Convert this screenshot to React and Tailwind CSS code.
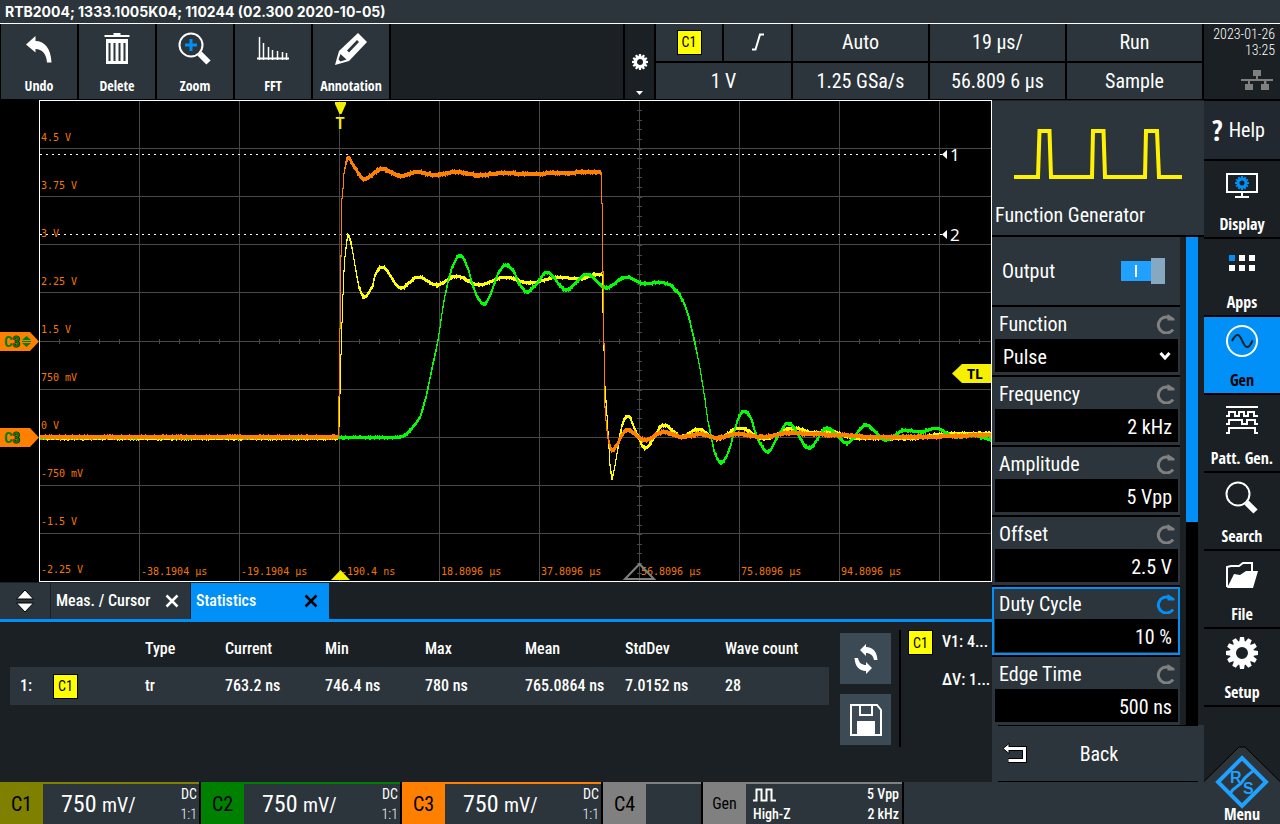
import React from "react";

const UI = "font-['Roboto_Condensed','Open_Sans_Condensed',sans-serif]";

/* ---------- trace geometry ---------- */

// Monotone cubic interpolation through the given points, one sample per pixel.
function sample(points) {
  const n = points.length;
  const d = [];
  for (let i = 0; i < n - 1; i++) {
    d.push((points[i + 1][1] - points[i][1]) / (points[i + 1][0] - points[i][0]));
  }
  const m = [d[0]];
  for (let i = 1; i < n - 1; i++) {
    m.push(d[i - 1] * d[i] <= 0 ? 0 : (2 * d[i - 1] * d[i]) / (d[i - 1] + d[i]));
  }
  m.push(d[n - 2]);
  const out = [];
  let k = 0;
  for (let x = Math.ceil(points[0][0]); x <= points[n - 1][0]; x++) {
    while (k < n - 2 && x > points[k + 1][0]) k++;
    const [x0, y0] = points[k];
    const [x1, y1] = points[k + 1];
    const h = x1 - x0;
    const t = (x - x0) / h;
    const t2 = t * t;
    const t3 = t2 * t;
    out.push([
      x,
      (2 * t3 - 3 * t2 + 1) * y0 + (t3 - 2 * t2 + t) * h * m[k] + (-2 * t3 + 3 * t2) * y1 + (t3 - t2) * h * m[k + 1],
    ]);
  }
  return out;
}

// Vertical strokes, one per column, with a little acquisition noise.
function tracePath(points, thick, seed) {
  let s = seed;
  const rnd = () => {
    s = (s * 16807) % 2147483647;
    return s / 2147483647;
  };
  let prev = null;
  return sample(points)
    .map(([x, y]) => {
      const from = prev === null ? y : prev;
      prev = y;
      const steep = Math.abs(y - from) > 5;
      const w = steep ? 1 : thick;
      const a = Math.round(Math.min(y, from) - w / 2 - (rnd() > 0.8 ? 1 : 0));
      const b = Math.round(Math.max(y, from) + w / 2 + (rnd() > 0.8 ? 1 : 0));
      return `M${x - 0.5} ${a}V${b}`;
    })
    .join("");
}

const ORANGE = [
  [41, 437], [338, 437], [339, 396], [340, 328], [341, 255], [342, 198], [343, 188], [344, 173], [348, 158], [355, 168],
  [364, 179], [382, 169], [401, 176], [417, 172], [435, 175], [456, 172], [479, 175], [507, 173], [525, 174], [560, 173],
  [600, 172], [601, 172], [602, 203], [603, 271], [604, 344], [605, 407], [606, 420], [608, 437], [612, 450], [627, 430],
  [645, 440], [664, 432], [682, 437], [700, 434], [717, 438], [738, 434], [762, 437], [790, 433], [810, 434], [840, 435],
  [875, 437], [930, 437], [950, 436], [991, 435],
];
const YELLOW = [
  [41, 438], [338, 438], [339, 425], [341, 354], [342, 322], [343, 294], [344, 270], [346, 247], [348, 235], [351, 243],
  [355, 265], [359, 287], [364, 297], [372, 287], [376, 273], [382, 267], [401, 288], [418, 277], [437, 285], [456, 276],
  [479, 285], [505, 277], [529, 283], [560, 277], [578, 279], [600, 274], [602, 274], [603, 312], [604, 350], [605, 386],
  [607, 415], [609, 448], [610, 465], [612, 478], [615, 465], [618, 447], [621, 430], [624, 420], [628, 416], [636, 432],
  [645, 448], [664, 425], [682, 437], [698, 429], [717, 439], [740, 428], [764, 439], [793, 428], [815, 433], [828, 431],
  [855, 438], [905, 439], [945, 434], [991, 433],
];
const GREEN = [
  [41, 438], [400, 437], [405, 435], [412, 428], [420, 417], [426, 397], [431, 373], [438, 340], [443, 307], [447, 286],
  [450, 274], [454, 263], [460, 255], [467, 266], [473, 286], [478, 298], [484, 304], [491, 293], [497, 276], [501, 269],
  [506, 265], [514, 272], [519, 283], [527, 292], [535, 286], [547, 272], [566, 290], [587, 274], [606, 288], [626, 277],
  [645, 284], [659, 282], [668, 284], [676, 290], [682, 299], [687, 311], [691, 326], [695, 343], [698, 358], [701, 374],
  [704, 393], [706, 407], [708, 421], [711, 436], [714, 450], [717, 458], [721, 463], [726, 457], [731, 444], [736, 425],
  [740, 415], [745, 411], [750, 416], [755, 431], [760, 443], [768, 452], [777, 438], [788, 423], [809, 448], [827, 428],
  [847, 443], [866, 425], [886, 440], [905, 430], [921, 432], [936, 428], [955, 437], [970, 435], [991, 440],
];

const H_LINES = [148, 196, 244, 292, 341, 389, 437, 485, 533];
const V_LINES = [139, 239, 339, 439, 539, 639, 739, 839, 939];
const V_LABELS = ["4.5 V", "3.75 V", "3 V", "2.25 V", "1.5 V", "750 mV", "0 V", "-750 mV", "-1.5 V", "-2.25 V"];
const T_LABELS = ["-38.1904 µs", "-19.1904 µs", "-190.4 ns", "18.8096 µs", "37.8096 µs", "56.8096 µs", "75.8096 µs", "94.8096 µs"];
const H_TICKS = Array.from({ length: 47 }, (_, i) => 59 + i * 20);
const V_TICKS = Array.from({ length: 49 }, (_, i) => Math.round(110 + i * 9.64));

function Graticule() {
  return (
    <svg viewBox="0 100 992 482" className="block w-full bg-black" role="img" aria-label="Waveform display">
      <g stroke="#484848" strokeWidth="1" shapeRendering="crispEdges">
        {H_LINES.map((y) => <path key={y} d={`M40 ${y}.5H991`} />)}
        {V_LINES.map((x) => <path key={x} d={`M${x}.5 101V581`} />)}
        {H_TICKS.map((x) => <path key={x} d={`M${x}.5 339V344`} />)}
        {V_TICKS.map((y) => <path key={y} d={`M637 ${y}.5H642`} />)}
      </g>
      <g fill="#f07800" fontSize="10" className="font-['DejaVu_Sans_Mono',monospace]">
        {V_LABELS.map((t, i) => <text key={t} x="41" y={141 + i * 48}>{t}</text>)}
        {T_LABELS.map((t, i) => <text key={t} x={141 + i * 100} y="575">{t}</text>)}
      </g>
      <g stroke="#fff" strokeDasharray="2 4" shapeRendering="crispEdges">
        <path d="M40 154.5H942" />
        <path d="M40 234.5H942" />
      </g>
      <g strokeWidth="1" fill="none" shapeRendering="crispEdges">
        <path stroke="#ffff00" d={tracePath(YELLOW, 3, 11)} />
        <path stroke="#00ff00" d={tracePath(GREEN, 3, 77)} />
        <path stroke="#ff8000" d={tracePath(ORANGE, 4, 5)} />
      </g>
      <path d="M39.5 100.5H991.5V581.5H39.5Z" fill="none" stroke="#fff" shapeRendering="crispEdges" />
      <g fill="#fff" fontSize="17" className="font-['Noto_Sans',sans-serif]">
        <path d="M942 154.5L947 150V159Z" />
        <path d="M942 234.5L947 230V239Z" />
        <text x="950" y="161">1</text>
        <text x="950" y="241">2</text>
      </g>
      <g fill="#f4f000">
        <path d="M335 102H346V104L341.5 114H339.5L335 104Z" />
        <text x="340" y="129" fontSize="16" fontWeight="600" textAnchor="middle" className="font-['Noto_Sans',sans-serif]">T</text>
        <path d="M331 580L340.5 570L350 580Z" />
        <path d="M952 373.5L962 364H991V383H962Z" />
      </g>
      <text x="975" y="379" fontSize="14" fontWeight="700" textAnchor="middle" className="font-['Noto_Sans',sans-serif]">TL</text>
      <path d="M625 579L639.5 564L654 579Z" fill="none" stroke="#808080" strokeWidth="2" />
      {[341, 437].map((y) => (
        <g key={y}>
          <path d={`M0 ${y - 9}H30L39 ${y + 0.5}L30 ${y + 10}H0Z`} fill="#ff8000" />
          <text x="4" y={y + 6} fontSize="15" fontWeight="700" fill="#008000">
            C<tspan stroke="#000" strokeWidth="1" paintOrder="stroke">3</tspan>
          </text>
        </g>
      ))}
      <path d="M22 340L26.5 336L31 340ZM22 343L26.5 347L31 343ZM22 341h9v1h-9z" fill="#008000" />
    </svg>
  );
}

/* ---------- icons ---------- */

function Gear({ className, teeth = 12 }) {
  return (
    <svg viewBox="0 0 32 32" className={className} aria-hidden="true">
      <g fill="currentColor">
        {Array.from({ length: teeth }, (_, i) => (
          <path key={i} d="M14 0H18L19 6H13Z" transform={`rotate(${(360 / teeth) * i} 16 16)`} />
        ))}
      </g>
      <circle cx="16" cy="16" r="9" fill="none" stroke="currentColor" strokeWidth="6" />
    </svg>
  );
}

const UndoIcon = () => (
  <svg viewBox="0 0 34 34" className="size-[34px]" aria-hidden="true">
    <path d="M4 12.5L13.500 4V9C22 9 29 16 29.500 30.500H25C24.500 22 20 17 13.500 17V20.500Z" fill="#fff" />
  </svg>
);
const TrashIcon = () => (
  <svg viewBox="0 0 34 34" className="size-[34px]" aria-hidden="true">
    <path d="M4.5 3H13.500V1H20.500V3H29.500V5H4.500Z" fill="#fff" />
    <path d="M6 7H28V32H6Z" fill="#fff" />
    <path d="M9.5 11V29M14.500 11V29M19.500 11V29M24.500 11V29" stroke="#2b353b" strokeWidth="2" />
  </svg>
);
const Magnifier = ({ plus = false, className }) => (
  <svg viewBox="0 0 34 34" className={className} aria-hidden="true">
    <circle cx="13" cy="13" r="11.5" fill="none" stroke="#fff" strokeWidth="2" />
    <path d="M21.5 21.500L30.500 30.500" stroke="#fff" strokeWidth="6" />
    {plus && <path d="M13 7V19M7 13H19" stroke="#0090f8" strokeWidth="3" />}
  </svg>
);
const FftIcon = () => (
  <svg viewBox="0 0 34 34" className="size-[34px]" aria-hidden="true">
    <path d="M1 26.5H33" stroke="#fff" strokeWidth="2" />
    <path d="M3.5 5V28M7.500 11V28M12.500 15V28M16.500 18V28M21.500 19V28M26.500 20V28M30.500 21V28" stroke="#fff" strokeWidth="1.5" />
  </svg>
);
const PencilIcon = () => (
  <svg viewBox="0 0 34 34" className="size-[34px]" aria-hidden="true">
    <path d="M24 1L33 10L15 29L1 33L5 19Z" fill="#fff" />
    <path d="M23 8L25 10L15 20.500L13 18.500ZM6.500 22L12.500 27.500L6.500 29.500L4.500 27.500Z" fill="#2b353b" />
  </svg>
);
const EdgeIcon = () => (
  <svg viewBox="0 0 14 18" className="h-[18px] w-[14px]" aria-label="Rising edge">
    <path d="M1 16.5H4.500L9 1.500H13" fill="none" stroke="#fff" strokeWidth="2" />
  </svg>
);
const NetworkIcon = () => (
  <svg viewBox="0 0 32 20" className="h-5 w-8" aria-label="Network">
    <path d="M12 0H20V6H17V9H32V11H25.500V14H28V20H20V14H23V11H9V14H12V20H4V14H7V11H0V9H15V6H12Z" fill="#808080" />
  </svg>
);
const DisplayIcon = () => (
  <svg viewBox="0 0 32 32" className="size-8" aria-hidden="true">
    <path d="M1 5H31V23H1Z" fill="none" stroke="#fff" strokeWidth="2" />
    <path d="M15 24H17V27H23V29H9V27H15Z" fill="#fff" />
    <g fill="#0090f8">
      {Array.from({ length: 12 }, (_, i) => (
        <path key={i} d="M15 7H17V11H15Z" transform={`rotate(${30 * i} 16 14)`} />
      ))}
    </g>
    <circle cx="16" cy="14" r="4" fill="none" stroke="#0090f8" strokeWidth="3" />
  </svg>
);
const AppsIcon = () => (
  <svg viewBox="0 0 32 32" className="size-8" aria-hidden="true">
    <path d="M3 8H9V14H3Z" fill="#0090f8" />
    <path d="M13 8H19V14H13ZM23 8H29V14H23ZM3 18H9V24H3ZM13 18H19V24H13ZM23 18H29V24H23Z" fill="#fff" />
  </svg>
);
const GenIcon = () => (
  <svg viewBox="0 0 32 32" className="size-8" aria-hidden="true">
    <circle cx="16" cy="16" r="15" fill="none" stroke="#fff" strokeWidth="2" />
    <path d="M6 16C8 12 10 9.500 12 10C16 11 17 22 21 22C24 22 25 19 26.500 15.500" fill="none" stroke="#1a2023" strokeWidth="2" />
  </svg>
);
const PatternIcon = () => (
  <svg viewBox="0 0 32 32" className="size-8" aria-hidden="true">
    <path
      d="M0 4H32M0 13H3V9H9V13H13V9H18V13H22V9H28V13H32M0 21H3V17H16V21H21V17H29V21H32M0 30H3V25H29V30H32"
      fill="none" stroke="#fff" strokeWidth="2"
    />
  </svg>
);
const FolderIcon = () => (
  <svg viewBox="0 0 32 32" className="size-8" aria-hidden="true">
    <path d="M1 28V8L5 7H13L17 4H26V13" fill="none" stroke="#fff" strokeWidth="2" />
    <path d="M8 15L14 16L20 12H32L27 29H1Z" fill="#fff" />
  </svg>
);
const Rotate = ({ active }) => (
  <svg viewBox="0 0 20 20" className={active ? "size-5 text-[#0090f8]" : "size-5 text-[#808080]"} aria-hidden="true">
    <path d="M18 15.500A8 8 0 1 1 14 3.500" fill="none" stroke="currentColor" strokeWidth="3" />
    <path d="M12.5 0L19.500 4.500V6.500H12.500Z" fill="currentColor" />
  </svg>
);
const RefreshIcon = () => (
  <svg viewBox="0 0 26 32" className="h-8 w-[26px]" aria-hidden="true">
    <path d="M7 7L13 1V4C20 4 24 9 24.500 17H21C20 12 17 10 13 10V13Z" fill="#fff" />
    <path d="M19 25L13 31V28C6 28 2 23 1.500 15H5C6 20 9 22 13 22V19Z" fill="#fff" />
  </svg>
);
const SaveIcon = () => (
  <svg viewBox="0 0 32 32" className="size-8" aria-hidden="true">
    <path d="M1 1H27L31 6V31H1Z" fill="none" stroke="#fff" strokeWidth="2" />
    <path d="M10 1V11H22V1" fill="none" stroke="#fff" strokeWidth="2" />
    <path d="M7 17H25V31H7Z" fill="#fff" />
  </svg>
);
const BackIcon = () => (
  <svg viewBox="0 0 26 22" className="h-[22px] w-[26px]" aria-hidden="true">
    <path d="M7 5.500H22.500V17.500H6" fill="none" stroke="#000" strokeWidth="5" />
    <path d="M1 5.500L7 0.500V10.500Z" fill="#fff" stroke="#000" />
    <path d="M6 5.500H22.500V17.500H6.500" fill="none" stroke="#fff" strokeWidth="3" />
  </svg>
);

/* ---------- pieces ---------- */

function Badge() {
  return (
    <span className="inline-flex h-[25px] w-[25px] shrink-0 items-center justify-center border border-black bg-[#ffff00] text-sm leading-none font-normal text-black">
      C1
    </span>
  );
}

function ToolButton({ icon, label }) {
  return (
    <button
      type="button"
      className="flex w-[76px] flex-col items-center justify-between bg-[#2b353b] pt-2 pb-1 font-['Open_Sans_Condensed',sans-serif] text-sm leading-[18px] font-semibold"
    >
      {icon}
      {label}
    </button>
  );
}

function Field({ id, label, value, active, select }) {
  return (
    <div
      className={
        active
          ? "flex h-[68px] flex-col border-2 border-[#0090f8] bg-[#2b353b] pb-px pl-px"
          : "flex h-[68px] flex-col bg-[#2b353b] pt-[2px] pr-[2px] pb-[3px] pl-[3px]"
      }
    >
      <div className="flex h-[30px] items-center justify-between pr-[3px] pl-1">
        <label htmlFor={id} className="text-xl leading-none">{label}</label>
        <Rotate active={active} />
      </div>
      {select ? (
        <div className="relative flex-1">
          <select id={id} defaultValue={value} className="h-full w-full appearance-none bg-black px-2 pt-[2px] text-xl leading-none">
            <option>{value}</option>
          </select>
          <svg viewBox="0 0 12 10" className="pointer-events-none absolute top-1/2 right-[7px] h-[10px] w-3 -translate-y-1/2" aria-hidden="true">
            <path d="M1.5 2L6 7L10.500 2" fill="none" stroke="#fff" strokeWidth="3" />
          </svg>
        </div>
      ) : (
        <input id={id} defaultValue={value} className="min-h-0 w-full flex-1 bg-black px-[6px] pt-[2px] text-right text-xl leading-none" />
      )}
    </div>
  );
}

function SideButton({ icon, label, active }) {
  return (
    <button
      type="button"
      className={
        active
          ? "flex h-[76px] flex-col items-center justify-between bg-[#0090f8] pt-2 pb-1 font-['Open_Sans_Condensed',sans-serif] text-base leading-[18px] font-semibold text-black"
          : "flex h-[76px] flex-col items-center justify-between bg-[#1a2023] pt-2 pb-1 font-['Open_Sans_Condensed',sans-serif] text-base leading-[18px] font-semibold"
      }
    >
      {icon}
      {label}
    </button>
  );
}

function Channel({ name, tint, edge }) {
  return (
    <button type="button" className={`flex w-[199px] border-t-2 bg-[#2b353b] ${edge}`}>
      <span className={`flex w-[43px] items-center justify-center self-stretch text-xl text-black ${tint}`}>{name}</span>
      <span className="flex-1 pl-[18px] text-left text-2xl leading-10">
        750 <span className="text-xl">mV/</span>
      </span>
      <span className="flex flex-col justify-between self-stretch pr-[2px] text-right text-sm leading-5">
        <span>DC</span>
        <span className="font-light">1:1</span>
      </span>
    </button>
  );
}

const CELL = "flex items-center justify-center bg-[#2b353b] text-xl leading-none";

export default function App() {
  return (
    <div className={`flex min-h-screen flex-col bg-black text-white ${UI}`}>
      <header className="h-6 border-b border-white bg-[#2b353b] px-[5px] font-['Inter',sans-serif] text-sm leading-6 font-bold">
        RTB2004; 1333.1005K04; 110244 (02.300 2020-10-05)
      </header>

      <div className="flex flex-1">
        <main className="flex min-w-0 flex-1 flex-col">
          {/* toolbar */}
          <div className="flex h-[76px] gap-[2px] pb-px pl-px">
            <ToolButton icon={<UndoIcon />} label="Undo" />
            <ToolButton icon={<TrashIcon />} label="Delete" />
            <ToolButton icon={<Magnifier plus className="size-[34px]" />} label="Zoom" />
            <ToolButton icon={<FftIcon />} label="FFT" />
            <ToolButton icon={<PencilIcon />} label="Annotation" />
            <div className="flex-1 bg-[#1a2023]" />
            <button type="button" aria-label="Toolbar settings" className="flex w-[29px] flex-col items-center justify-end gap-[21px] bg-[#1a2023] pb-1">
              <Gear className="size-4" />
              <svg viewBox="0 0 7 4" className="h-1 w-[7px]" aria-hidden="true"><path d="M0 0H7L3.5 4Z" fill="#fff" /></svg>
            </button>
            <div className="grid grid-cols-[66px_67px_135px_135px_135px] grid-rows-2 gap-[2px] pr-[2px]">
              <div className={CELL}><Badge /></div>
              <div className={CELL}><EdgeIcon /></div>
              <div className={CELL}>Auto</div>
              <div className={CELL}>19 µs/</div>
              <div className={CELL}>Run</div>
              <div className={`col-span-2 ${CELL}`}>1 V</div>
              <div className={CELL}>1.25 GSa/s</div>
              <div className={CELL}>56.809 6 µs</div>
              <div className={CELL}>Sample</div>
            </div>
          </div>

          <div className="flex flex-1">
            {/* waveform and results */}
            <section className="flex min-w-0 flex-1 flex-col bg-[#1a2023]">
              <Graticule />
              <div className="flex h-10 gap-px border-b-3 border-[#0090f8] bg-[#1a2023] pt-px text-base font-medium">
                <button type="button" aria-label="Resize panel" className="flex w-[50px] items-center justify-center bg-[#2b353b]">
                  <svg viewBox="0 0 18 24" className="h-6 w-[18px]" aria-hidden="true">
                    <path d="M0.5 10L9 1L17.500 10ZM0.500 14L9 23L17.500 14Z" fill="#fff" stroke="#000" />
                  </svg>
                </button>
                <div className="flex w-[139px] items-center justify-between bg-[#2b353b] pr-[11px] pl-[5px]">
                  <button type="button">Meas. / Cursor</button>
                  <button type="button" aria-label="Close Meas. / Cursor">
                    <svg viewBox="0 0 14 14" className="size-[14px]" aria-hidden="true"><path d="M1.5 1.500L12.500 12.500M12.500 1.500L1.500 12.500" stroke="#fff" strokeWidth="2.5" /></svg>
                  </button>
                </div>
                <div className="flex w-[138px] items-center justify-between bg-[#0090f8] pr-[11px] pl-[5px]">
                  <button type="button">Statistics</button>
                  <button type="button" aria-label="Close Statistics">
                    <svg viewBox="0 0 14 14" className="size-[14px]" aria-hidden="true"><path d="M1.5 1.500L12.500 12.500M12.500 1.500L1.500 12.500" stroke="#000" strokeWidth="2.5" /></svg>
                  </button>
                </div>
              </div>

              <div className="flex flex-1 pt-2">
                <div className="min-w-0 flex-1 pr-[11px] pl-[10px]">
                  <table className="w-full table-fixed text-left text-base font-medium">
                    <thead>
                      <tr className="h-[37px]">
                        <th className="w-[43px]" />
                        <th className="w-[92px]" />
                        <th className="w-20 font-medium">Type</th>
                        <th className="w-[100px] font-medium">Current</th>
                        <th className="w-[100px] font-medium">Min</th>
                        <th className="w-[100px] font-medium">Max</th>
                        <th className="w-[100px] font-medium">Mean</th>
                        <th className="w-[100px] font-medium">StdDev</th>
                        <th className="font-medium">Wave count</th>
                      </tr>
                    </thead>
                    <tbody>
                      <tr className="h-[38px] bg-[#2b353b] whitespace-nowrap">
                        <td className="pl-[10px]">1:</td>
                        <td><span className="flex"><Badge /></span></td>
                        <td>tr</td>
                        <td>763.2 ns</td>
                        <td>746.4 ns</td>
                        <td>780 ns</td>
                        <td>765.0864 ns</td>
                        <td>7.0152 ns</td>
                        <td>28</td>
                      </tr>
                    </tbody>
                  </table>
                </div>
                <div className="flex flex-col gap-[10px] pt-[3px] pr-2">
                  <button type="button" aria-label="Reset statistics" className="flex size-[51px] items-center justify-center bg-[#3c4a55]"><RefreshIcon /></button>
                  <button type="button" aria-label="Save" className="flex size-[51px] items-center justify-center bg-[#3c4a55]"><SaveIcon /></button>
                </div>
                <div className="mb-[35px] flex w-[93px] gap-[9px] border-l-2 border-black pl-[7px]">
                  <Badge />
                  <div className="flex flex-col gap-[14px] text-base leading-6 font-medium whitespace-nowrap">
                    <span>V1: 4...</span>
                    <span>ΔV: 1...</span>
                  </div>
                </div>
              </div>
            </section>

            {/* function generator */}
            <aside className="flex w-[212px] flex-col bg-[#1a2023]">
              <div className="mt-px flex h-[134px] flex-col justify-between bg-[#2b353b] pt-[26px] pb-2 pl-[3px]">
                <svg viewBox="0 0 170 54" className="ml-[19px] h-[54px] w-[170px]" aria-hidden="true">
                  <path d="M0 50H24L25.5 4H35.500L37 50H78L79 4H89.500L91 50H131L132 4H143L145 50H168" fill="none" stroke="#fff200" strokeWidth="4" />
                </svg>
                <h2 className="text-xl leading-6">Function Generator</h2>
              </div>
              <div className="flex border-t-2 border-black">
                <div className="flex flex-1 flex-col gap-[2px] bg-black">
                  <div className="flex h-[68px] items-center justify-between bg-[#2b353b] pr-[15px] pl-[10px]">
                    <label htmlFor="output" className="text-xl">Output</label>
                    <span className="relative flex h-[26px] w-11 items-center">
                      <input id="output" type="checkbox" role="switch" defaultChecked className="h-5 w-[44px] appearance-none bg-[#20a0ff]" />
                      <span className="pointer-events-none absolute left-[14px] h-3 w-[2px] bg-white" />
                      <span className="pointer-events-none absolute right-0 h-[26px] w-[14px] bg-[#86a8c0]" />
                    </span>
                  </div>
                  <Field id="function" label="Function" value="Pulse" select />
                  <Field id="frequency" label="Frequency" value="2 kHz" />
                  <Field id="amplitude" label="Amplitude" value="5 Vpp" />
                  <Field id="offset" label="Offset" value="2.5 V" />
                  <Field id="duty" label="Duty Cycle" value="10 %" active />
                  <Field id="edge" label="Edge Time" value="500 ns" />
                </div>
                <div className="mr-[6px] ml-[6px] w-3 bg-black">
                  <div className="h-7/12 bg-[#0090f8]" />
                </div>
              </div>
              <button type="button" className="flex flex-1 items-center bg-[#2b353b] px-[6px]">
                <span className="flex flex-1 items-center self-stretch border-y border-black pl-1">
                  <BackIcon />
                  <span className="flex-1 pr-7 text-center text-xl">Back</span>
                </span>
              </button>
            </aside>
          </div>

          {/* channel bar */}
          <footer className="flex h-[42px] gap-[2px]">
            <Channel name="C1" tint="bg-[#808000]" edge="border-[#808000]" />
            <Channel name="C2" tint="bg-[#008000]" edge="border-[#008000]" />
            <Channel name="C3" tint="bg-[#ff8000]" edge="border-[#ff8000]" />
            <button type="button" className="flex w-[98px] border-t-2 border-[#808080] bg-[#2b353b]">
              <span className="flex w-[43px] items-center justify-center self-stretch bg-[#808080] text-xl text-black">C4</span>
            </button>
            <button type="button" className="flex w-[199px] border-t-2 border-[#808080] bg-[#2b353b] text-sm font-medium">
              <span className="flex w-[43px] items-center justify-center self-stretch bg-[#808080] text-base font-normal text-black">Gen</span>
              <span className="flex flex-1 flex-col justify-between self-stretch pl-[7px] text-left leading-5">
                <svg viewBox="0 0 24 14" className="mt-1 h-[14px] w-6" aria-label="Pulse">
                  <path d="M0 12.5H3.500V1.500H8.500V12.500H13.500V1.500H18.500V12.500H23" fill="none" stroke="#fff" strokeWidth="2" />
                </svg>
                <span>High-Z</span>
              </span>
              <span className="flex flex-col justify-between self-stretch pr-[3px] text-right leading-5">
                <span>5 Vpp</span>
                <span>2 kHz</span>
              </span>
            </button>
            <div className="flex-1 bg-[#2b353b]" />
          </footer>
        </main>

        {/* side menu */}
        <nav className="flex w-[76px] flex-col gap-[2px]">
          <div className="flex h-[75px] flex-col items-end bg-[#1a2023] pt-[2px] pr-[5px] text-sm leading-4 font-light">
            <span>2023-01-26</span>
            <span>13:25</span>
            <span className="pt-3 pr-[2px]"><NetworkIcon /></span>
          </div>
          <button type="button" className="flex h-[58px] items-center gap-[6px] bg-[#22282f] pl-2 text-xl leading-none">
            <span className="font-['Open_Sans_Condensed',sans-serif] text-[28px] leading-none font-bold">?</span>Help
          </button>
          <SideButton icon={<DisplayIcon />} label="Display" />
          <SideButton icon={<AppsIcon />} label="Apps" />
          <SideButton icon={<GenIcon />} label="Gen" active />
          <SideButton icon={<PatternIcon />} label="Patt. Gen." />
          <SideButton icon={<Magnifier className="size-[34px]" />} label="Search" />
          <SideButton icon={<FolderIcon />} label="File" />
          <SideButton icon={<Gear className="size-8" />} label="Setup" />
          <button type="button" className="flex flex-1 flex-col items-center justify-end bg-[#1a2023]">
            <svg viewBox="0 0 76 117" className="block h-[117px] w-full" aria-label="Menu">
              <path d="M-1 75.500L35 40H41L77 75.500V118H-1Z" fill="#2b353b" stroke="#000" />
              <path d="M38 51L62 75L38 99L14 75Z" fill="none" stroke="#20a0ff" strokeWidth="4" />
              <path d="M26 87C30 79 35 80 38 75C41 69 45 68 50 63" fill="none" stroke="#20a0ff" strokeWidth="3" />
              <text x="26" y="76" fontSize="16" fontWeight="700" fill="#20a0ff" className="font-['Liberation_Sans',sans-serif]">R</text>
              <text x="39" y="87" fontSize="16" fontWeight="700" fill="#20a0ff" className="font-['Liberation_Sans',sans-serif]">S</text>
              <text x="38" y="113" fontSize="16" fontWeight="600" fill="#fff" textAnchor="middle" className="font-['Open_Sans_Condensed',sans-serif]">Menu</text>
            </svg>
          </button>
        </nav>
      </div>
    </div>
  );
}
